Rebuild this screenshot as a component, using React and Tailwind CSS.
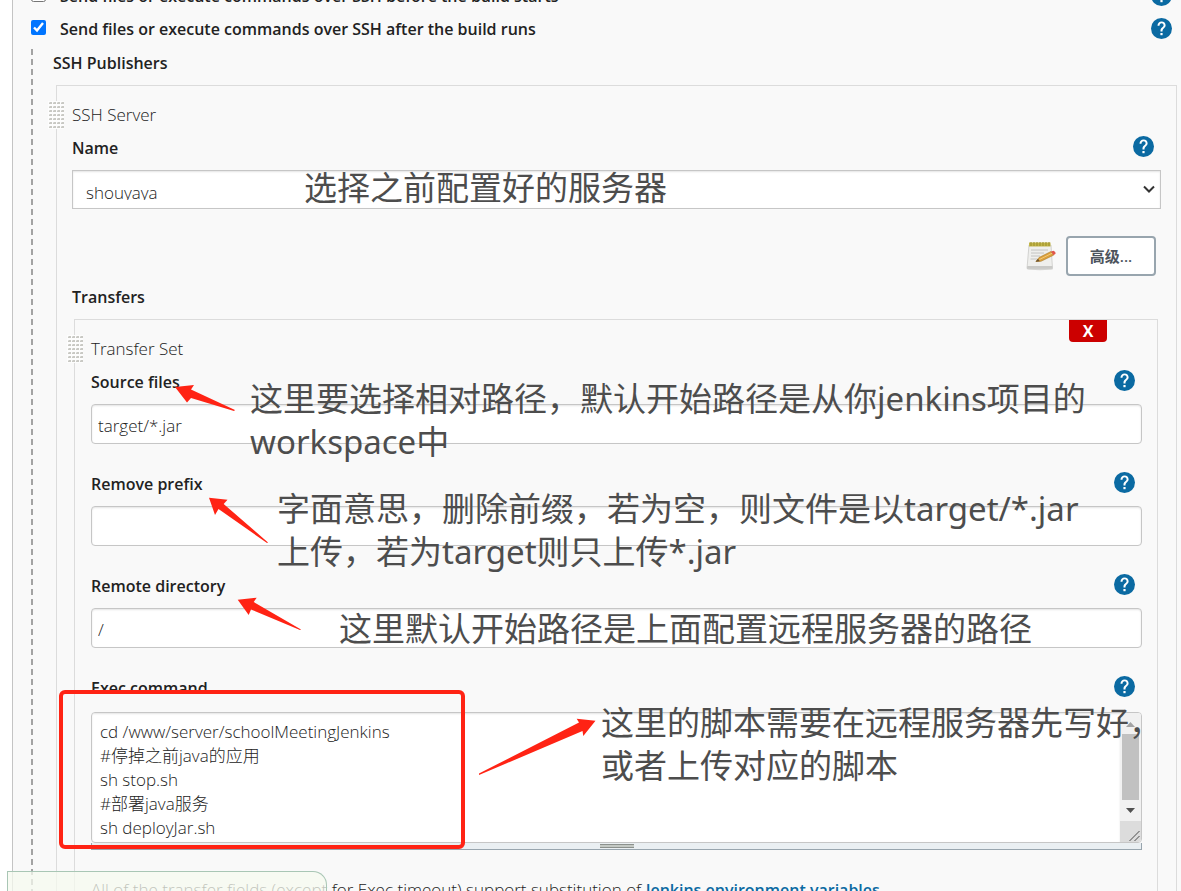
import React from "react";

const LATIN = "font-['Open_Sans','Noto_Sans_CJK_SC',sans-serif]";

function HelpIcon() {
  return (
    <svg viewBox="0 0 21 21" className="size-[21px]" aria-hidden="true">
      <circle cx="10.5" cy="10.5" r="10.5" fill="#0b6aa2" />
      <path
        d="M6.5 7.7C6.5 5.200 8.200 3.400 10.600 3.400C13 3.400 14.600 5 14.600 7.200C14.600 9.900 11.500 10.500 11.500 12.900V13.500H9.500V12.600C9.500 9.600 12.600 9.200 12.600 7.300C12.600 6.100 11.800 5.300 10.600 5.300C9.300 5.300 8.500 6.200 8.500 7.700Z"
        fill="#fff"
      />
      <rect x="9.4" y="15" width="2.200" height="2.200" fill="#fff" />
    </svg>
  );
}

function HelpLink({ topic }) {
  return (
    <a href="#help" aria-label={`Help for ${topic}`} className="shrink-0">
      <HelpIcon />
    </a>
  );
}

function DragHandle() {
  const dots = [];
  for (let row = 0; row < 7; row++) {
    for (let col = 0; col < 4; col++) {
      dots.push(
        <g key={`${row}-${col}`} transform={`translate(${1 + col * 4} ${1 + row * 4})`}>
          <rect width="3" height="2" fill="#dededb" />
          <rect x="1" y="0" width="2" height="2" fill="#c9c9c4" />
          <rect x="0" y="1" width="2" height="1" fill="#c9c9c4" />
        </g>
      );
    }
  }
  return (
    <svg viewBox="0 0 16 28" className="h-7 w-4" aria-hidden="true">
      <rect width="16" height="28" fill="#fdfdfd" />
      {dots}
    </svg>
  );
}

function NotepadIcon() {
  return (
    <svg viewBox="0 0 30 30" className="size-[30px]" aria-hidden="true">
      <ellipse cx="14" cy="28" rx="13" ry="1.2" fill="#d5d5d3" />
      <path d="M3 4H25L26.5 27.5H1Z" fill="#efefed" stroke="#c9c9c6" strokeWidth="0.8" />
      <path d="M1.2 25H26.4V27.6H1Z" fill="#c9c9c7" />
      <path d="M3 1.5H24.5V5.5H3Z" fill="#c2b548" />
      <path d="M5 1V5M8 1V5M11 1V5M14 1V5M17 1V5M20 1V5M23 1V5" stroke="#998d2a" strokeWidth="1" />
      <path d="M5 9H22M5 12H18M5 15H14M4.5 18H11" stroke="#c4c4c2" strokeWidth="1" />
      <path d="M10 20.500L13 16.500L25 10.500L27.500 14.200L15 20.300Z" fill="#dda13c" stroke="#a87828" strokeWidth="0.6" />
      <path d="M13.500 18.500L26.500 12" stroke="#f0c878" strokeWidth="1" />
      <path d="M9.500 20.800L12 17.800L13.800 20.300Z" fill="#6d5430" />
      <path d="M25 10.500L27.500 9.800Q30 10.600 29.600 12.800L27.500 14.200Z" fill="#e0564c" />
    </svg>
  );
}

function CheckRow({ id, label, checked }) {
  return (
    <div className="flex h-[33px] items-center pr-[7px]">
      <input
        id={id}
        type="checkbox"
        defaultChecked={checked}
        className="mr-3.5 mb-0.5 size-[15px] accent-[#0075ff]"
      />
      <label htmlFor={id} className="flex-1 text-base font-semibold">
        {label}
      </label>
      <HelpLink topic={label} />
    </div>
  );
}

function FieldHead({ id, label }) {
  return (
    <div className="flex h-6 items-start justify-between pr-[7px]">
      <label htmlFor={id} className="text-base font-semibold">
        {label}
      </label>
      <HelpLink topic={label} />
    </div>
  );
}

function TextField({ id, label, value }) {
  return (
    <div className="mb-7">
      <FieldHead id={id} label={label} />
      <input
        id={id}
        type="text"
        defaultValue={value}
        className="mt-2.5 block h-10 w-full rounded-[4px] border border-[#c6c6c6] bg-white px-1.5 pt-0.5 shadow-[inset_0_1px_2px_#e4e4e4] outline-none"
      />
    </div>
  );
}

function ScrollTrack() {
  return (
    <div className="flex w-[21px] flex-col bg-[#f1f1f1]" aria-hidden="true">
      <svg viewBox="0 0 21 21" className="h-[21px] w-[21px]">
        <path d="M6 14H15L10.500 9Z" fill="#a3a3a3" />
      </svg>
      <div className="mx-0.5 h-[66px] bg-[#c1c1c1]" />
      <svg viewBox="0 0 21 21" className="h-[21px] w-[21px]">
        <path d="M6 8H15L10.500 13Z" fill="#505050" />
      </svg>
      <svg viewBox="0 0 21 21" className="h-[21px] w-[21px] bg-[#dcdcdc]">
        <path d="M9.500 20L19.500 10M14.500 20L19.500 15" stroke="#4a4a4a" strokeWidth="1" />
      </svg>
    </div>
  );
}

function Note({ className, children }) {
  return (
    <p
      className={`absolute font-['Noto_Sans','Noto_Sans_CJK_SC',sans-serif] text-[33px] leading-[43px] font-normal whitespace-nowrap text-[#4d4d4d] ${className}`}
    >
      {children}
    </p>
  );
}

function Annotations() {
  return (
    <div className="pointer-events-none absolute inset-0">
      <svg className="absolute inset-0 h-full w-full" fill="#ff2314" aria-hidden="true">
        <path d="M175 387L194 385L191 389.500L235 410L234 411L191 398L187 402.500Z" />
        <path d="M209 497.700L227.500 499.700L223.700 504L268 542.500L267 543L218.500 509L215 515Z" />
        <path d="M237.700 599.700L256.700 597.700L253.700 602L301 629.500L300 630L251 609.500L248.700 615Z" />
        <path d="M595.500 720.700L576.700 718.700L579 722.500L479 773.500L479 775L582.500 731L583.300 736Z" />
      </svg>
      <div className="absolute top-[690px] left-[59px] h-[159px] w-[406px] rounded-[6px] border-[4px] border-[#ff2314]" />
      <Note className="top-[166px] left-[304px]">选择之前配置好的服务器</Note>
      <Note className="top-[377px] left-[250px]">
        这里要选择相对路径，默认开始路径是从你jenkins项目的
        <br />
        workspace中
      </Note>
      <Note className="top-[487px] left-[277px]">
        字面意思，删除前缀，若为空，则文件是以target/*.jar
        <br />
        上传，若为target则只上传*.jar
      </Note>
      <Note className="top-[607px] left-[339px]">这里默认开始路径是上面配置远程服务器的路径</Note>
      <Note className="top-[701px] left-[601px]">
        这里的脚本需要在远程服务器先写好，
        <br />
        或者上传对应的脚本
      </Note>
    </div>
  );
}

const SCRIPT = `cd /www/server/schoolMeetingJenkins
#停掉之前java的应用
sh stop.sh
#部署java服务
sh deployJar.sh`;

function TransferSet() {
  return (
    <section className="relative mr-[18px] ml-0.5 border border-b-0 border-[#dcdcdc] pt-[17px] pr-[15px] pl-4">
      <div className="absolute top-[15px] -left-2">
        <DragHandle />
      </div>
      <button
        type="button"
        className="absolute top-0 right-[50px] h-[22px] w-[38px] rounded-b-[4px] bg-[#cc0000] text-base leading-[22px] font-bold text-white"
      >
        X
      </button>
      <h3 className="mb-[9px] leading-6">Transfer Set</h3>
      <TextField id="source" label="Source files" value="target/*.jar" />
      <TextField id="prefix" label="Remove prefix" value="" />
      <TextField id="remote" label="Remote directory" value="/" />
      <FieldHead id="exec" label="Exec command" />
      <div className="mt-3 flex h-[131px] overflow-hidden rounded-[4px] border border-[#c6c6c6] bg-white">
        <textarea
          id="exec"
          defaultValue={SCRIPT}
          className="flex-1 resize-none overflow-hidden px-2 pt-[7px] leading-6 shadow-[inset_0_1px_2px_#e4e4e4] outline-none"
        />
        <ScrollTrack />
      </div>
      <div className="flex h-[7px] items-center justify-center border border-t-0 border-[#98a5ae] bg-[#eaeff2]">
        <div className="h-1 w-[34px] border-y border-[#8c918d] bg-[#c4c9c4]" />
      </div>
      <p className="mt-7 whitespace-nowrap">
        All of the transfer fields (except for Exec timeout) support substitution of{" "}
        <a href="#variables" className="text-base font-semibold text-[#0b6aa2]">
          Jenkins environment variables
        </a>
      </p>
    </section>
  );
}

export default function App() {
  return (
    <div
      className={`relative h-screen overflow-hidden bg-white pl-3 text-[17px] leading-6 font-light text-[#222] ${LATIN}`}
    >
      <main className="min-h-full border-l border-[#c4c4c4] bg-[#f9f9f9] pr-0.5 pl-[18px]">
        <div className="-mt-[21px]">
          <CheckRow id="before" label="Send files or execute commands over SSH before the build starts" />
          <CheckRow id="after" label="Send files or execute commands over SSH after the build runs" checked />
        </div>
        <div className="mt-1 flex">
          <div className="w-0.5 bg-[repeating-linear-gradient(to_bottom,#a3a3a3_0px,#a3a3a3_6px,transparent_6px,transparent_10px)]" />
          <div className="min-w-0 flex-1 pl-5">
            <h2 className="pt-0.5 text-base font-semibold">SSH Publishers</h2>
            <section className="relative mt-2.5 mr-0.5 ml-[3px] border border-b-0 border-[#dcdcdc] pt-[17px] pl-[15px]">
              <div className="absolute top-[15px] -left-[9px]">
                <DragHandle />
              </div>
              <h3 className="mb-[9px]">SSH Server</h3>
              <div className="pr-[15px]">
                <FieldHead id="server" label="Name" />
                <div className="relative mt-2.5">
                  <select
                    id="server"
                    className="block h-[39px] w-full appearance-none border border-[#c6c6c6] bg-white px-[13px] pt-2.5 pb-2 shadow-[inset_0_1px_2px_#e4e4e4] outline-none"
                  >
                    <option>shouyaya</option>
                  </select>
                  <svg
                    viewBox="0 0 12 8"
                    className="pointer-events-none absolute top-[15px] right-1.5 h-2 w-3"
                    aria-hidden="true"
                  >
                    <path d="M1 1.500L6 6.500L11 1.500" fill="none" stroke="#333" strokeWidth="2" />
                  </svg>
                </div>
                <div className="mt-[27px] flex items-center justify-end gap-2.5 pr-[5px]">
                  <NotepadIcon />
                  <button
                    type="button"
                    className="h-10 w-[90px] rounded-[4px] border-2 border-[#98a5ae] bg-white text-[15px] font-semibold text-[#4d545d]"
                  >
                    高级...
                  </button>
                </div>
              </div>
              <h3 className="mt-[9px] mb-2.5 text-base font-semibold">Transfers</h3>
              <TransferSet />
            </section>
          </div>
        </div>
      </main>
      <Annotations />
      <div className="absolute bottom-0 left-[7px] h-5 w-80 rounded-tr-[14px] border border-b-0 border-[#a9c6b5] bg-[#f5f9ef]/75" />
    </div>
  );
}
